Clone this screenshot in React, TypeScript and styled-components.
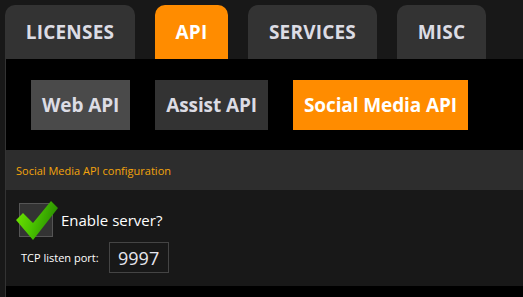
import styled, { createGlobalStyle } from 'styled-components';

const GlobalStyle = createGlobalStyle`
  html, body {
    margin: 0;
    padding: 0;
    background: #181818;
    font-family: "Open Sans", "Noto Sans", sans-serif;
  }
`;

const tabs = [
  { label: 'LICENSES', width: 130 },
  { label: 'API', width: 73, active: true },
  { label: 'SERVICES', width: 129 },
  { label: 'MISC', width: 89 },
];

const subTabs = [
  { label: 'Web API', kind: 'hover' },
  { label: 'Assist API', kind: 'normal' },
  { label: 'Social Media API', kind: 'active' },
];

export default function App() {
  return (
    <>
      <GlobalStyle />
      <Page>
        <TabBar>
          {tabs.map((t) => (
            <Tab key={t.label} $active={!!t.active} style={{ width: t.width }}>
              {t.label}
            </Tab>
          ))}
        </TabBar>
        <Panel>
          <SubTabBar>
            {subTabs.map((s) => (
              <SubTab key={s.label} $kind={s.kind}>
                {s.label}
              </SubTab>
            ))}
          </SubTabBar>
          <SectionHeader>Social Media API configuration</SectionHeader>
          <SectionBody>
            <CheckRow>
              <CheckBox>
                <CheckMark viewBox="0 0 44 44">
                  <defs>
                    <linearGradient id="chk" x1="0" y1="0" x2="1" y2="0.3">
                      <stop offset="0" stopColor="#74e800" />
                      <stop offset="0.55" stopColor="#48c000" />
                      <stop offset="1" stopColor="#2a8f00" />
                    </linearGradient>
                  </defs>
                  <polygon points="1,21 8,14 18,24 36,2 43,9 18,41" fill="url(#chk)" />
                </CheckMark>
              </CheckBox>
              <CheckLabel>Enable server?</CheckLabel>
            </CheckRow>
            <PortRow>
              <PortLabel>TCP listen port:</PortLabel>
              <PortInput>9997</PortInput>
            </PortRow>
          </SectionBody>
        </Panel>
      </Page>
    </>
  );
}

const Page = styled.div`
  width: 523px;
  height: 297px;
  overflow: hidden;
  background: #181818;
  display: flex;
  flex-direction: column;
`;

const TabBar = styled.div`
  display: flex;
  gap: 20px;
  padding: 5px 0 0 5px;
  height: 54px;
`;

const Tab = styled.div<{ $active: boolean }>`
  height: 54px;
  box-sizing: border-box;
  border-radius: 10px 10px 0 0;
  background: ${({ $active }) => ($active ? '#ff8c00' : '#333333')};
  color: ${({ $active }) => ($active ? '#ffffff' : '#dcdce4')};
  font-weight: 700;
  font-size: 19px;
  display: flex;
  align-items: center;
  justify-content: center;
  letter-spacing: 0.2px;
`;

const Panel = styled.div`
  flex: 1;
  margin-left: 5px;
  border-left: 1px solid #333333;
  background: #000000;
  display: flex;
  flex-direction: column;
  padding-bottom: 11px;
`;

const SubTabBar = styled.div`
  display: flex;
  gap: 25px;
  padding: 21px 0 20px 25px;
`;

const SubTab = styled.div<{ $kind: string }>`
  height: 50px;
  padding: 0 11px;
  display: flex;
  align-items: center;
  font-weight: 700;
  font-size: 19px;
  letter-spacing: -0.1px;
  background: ${({ $kind }) =>
    $kind === 'active' ? '#ff8c00' : $kind === 'hover' ? '#4a4a4a' : '#333333'};
  color: ${({ $kind }) => ($kind === 'active' ? '#ffffff' : '#dcdce4')};
`;

const SectionHeader = styled.div`
  height: 40px;
  background: #2d2d2d;
  color: #f4a40c;
  font-size: 11px;
  display: flex;
  align-items: center;
  padding-left: 10px;
`;

const SectionBody = styled.div`
  flex: 1;
  background: #181818;
  padding: 13px 0 0 13px;
  display: flex;
  flex-direction: column;
  gap: 5px;
`;

const CheckRow = styled.div`
  display: flex;
  align-items: center;
  gap: 8px;
`;

const CheckBox = styled.div`
  position: relative;
  width: 34px;
  height: 34px;
  box-sizing: border-box;
  background: #333333;
  border: 1px solid #555555;
`;

const CheckMark = styled.svg`
  position: absolute;
  left: -5px;
  top: -5px;
  width: 44px;
  height: 44px;
`;

const CheckLabel = styled.span`
  color: #ffffff;
  font-size: 15px;
`;

const PortRow = styled.div`
  display: flex;
  align-items: center;
  gap: 10px;
  padding-left: 2px;
`;

const PortLabel = styled.span`
  color: #ffffff;
  font-size: 11px;
`;

const PortInput = styled.div`
  width: 60px;
  height: 31px;
  box-sizing: border-box;
  border: 1px solid #444444;
  background: #181818;
  color: #e6e6ee;
  font-size: 18px;
  display: flex;
  align-items: center;
  justify-content: center;
`;
